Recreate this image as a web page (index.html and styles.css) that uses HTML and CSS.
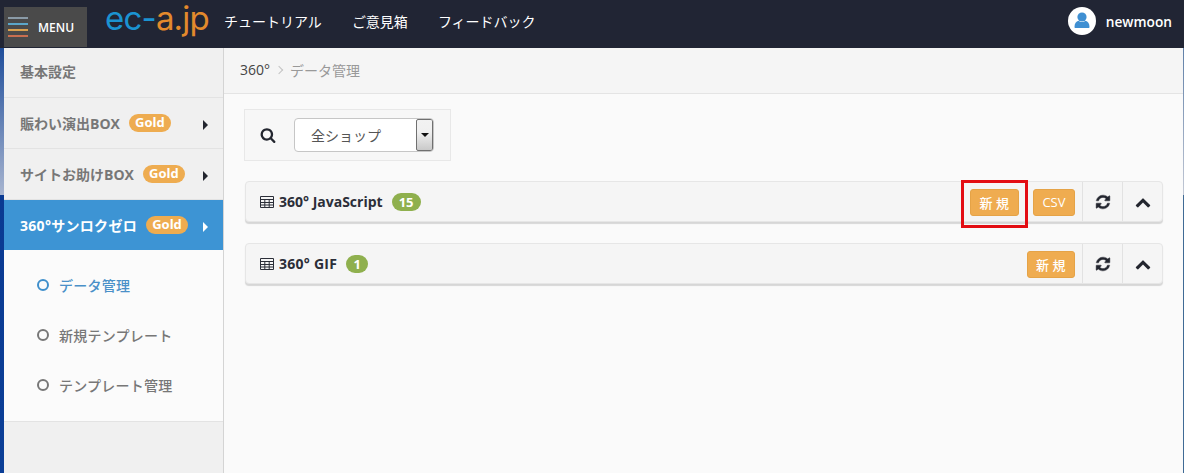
FILE: index.html
```html
<!DOCTYPE html>
<html lang="ja">
<head>
<meta charset="utf-8">
<title>360° データ管理</title>
<link rel="stylesheet" href="styles.css">
</head>
<body>
<header class="topbar">
  <div class="menu-btn">
    <span class="burger"><i class="b1"></i><i class="b2"></i><i class="b3"></i><i class="b4"></i></span>
    <span class="menu-label">MENU</span>
  </div>
  <div class="logo"><span class="logo-blue">ec-</span><span class="logo-orange">a.jp</span></div>
  <nav class="topnav">
    <a>チュートリアル</a>
    <a>ご意見箱</a>
    <a>フィードバック</a>
  </nav>
  <div class="user">
    <span class="avatar">
      <svg viewBox="0 0 28 28" width="28" height="28"><circle cx="14" cy="10" r="4.6" fill="#3f8fd2"/><path d="M7.500 21c-.6 0-1-.4-1-1 0-3.600 1.700-5.800 4-6.300 1 .9 2.200 1.400 3.500 1.400s2.500-.5 3.500-1.400c2.300.5 4 2.700 4 6.300 0 .6-.4 1-1 1z" fill="#3f8fd2"/></svg>
    </span>
    <span class="user-name">newmoon</span>
  </div>
</header>
<div class="body-row">
  <div class="desktop-edge"></div>
  <aside class="sidebar">
    <div class="side-item first"><span class="side-text">基本設定</span></div>
    <div class="side-item"><span class="side-text">賑わい演出BOX</span><span class="gold">Gold</span><span class="caret"></span></div>
    <div class="side-item"><span class="side-text">サイトお助けBOX</span><span class="gold">Gold</span><span class="caret"></span></div>
    <div class="side-item active"><span class="side-text">360°サンロクゼロ</span><span class="gold">Gold</span><span class="caret"></span></div>
    <ul class="submenu">
      <li class="current"><i class="ring"></i>データ管理</li>
      <li><i class="ring"></i>新規テンプレート</li>
      <li><i class="ring"></i>テンプレート管理</li>
    </ul>
  </aside>
  <main class="content">
    <div class="breadcrumb"><span class="crumb-root">360°</span><span class="crumb-sep"></span><span class="crumb-cur">データ管理</span></div>
    <div class="content-inner">
      <div class="searchbar">
        <svg class="search-icon" viewBox="0 0 1792 1792" width="16" height="16"><path fill="#23262f" d="M1216 832q0-185-131.500-316.500t-316.500-131.500-316.500 131.500-131.500 316.500 131.500 316.500 316.500 131.500 316.500-131.500 131.500-316.500zm512 832q0 52-38 90t-90 38q-54 0-90-38l-343-342q-179 124-399 124-143 0-273.500-55.500t-225-150-150-225-55.500-273.500 55.500-273.500 150-225 225-150 273.500-55.500 273.500 55.500 225 150 150 225 55.500 273.500q0 220-124 399l343 343q37 37 37 90z"/></svg>
        <div class="select">
          <span class="select-value">全ショップ</span>
          <span class="select-arrow"><i></i></span>
        </div>
      </div>

      <section class="panel">
        <h2 class="panel-title">
          <svg class="table-icon" viewBox="0 0 14 12" width="14" height="12"><path fill="none" stroke="#2b2e38" stroke-width="1" d="M.5.5h13v11H.5zM.5 3.500h13M.5 6.500h13M.5 9h13M4.800 3.500v8M9.200 3.500v8"/></svg>
          360° JavaScript<span class="count">15</span>
        </h2>
        <div class="panel-actions">
          <div class="btns">
            <span class="highlight"><button class="btn">新 規</button></span>
            <button class="btn btn-csv">CSV</button>
          </div>
          <button class="tool"><svg viewBox="0 0 1792 1792" width="16" height="16"><path fill="#23262f" stroke="#23262f" stroke-width="50" d="M1639 1056q0 5-1 7-64 268-268 434.500t-478 166.500q-146 0-282.500-55t-243.500-157l-129 129q-19 19-45 19t-45-19-19-45v-448q0-26 19-45t45-19h448q26 0 45 19t19 45-19 45l-137 137q71 66 161 102t187 36q134 0 250-65t186-179q11-17 53-117 8-23 30-23h192q13 0 22.500 9.500t9.500 22.500zm25-800v448q0 26-19 45t-45 19h-448q-26 0-45-19t-19-45 19-45l138-138q-148-137-349-137-134 0-250 65t-186 179q-11 17-53 117-8 23-30 23h-199q-13 0-22.500-9.500t-9.500-22.500v-7q65-268 270-434.500t480-166.500q146 0 284 55.500t245 156.500l130-129q19-19 45-19t45 19 19 45z"/></svg></button>
          <button class="tool"><svg viewBox="0 0 1792 1792" width="16" height="16"><path fill="#23262f" d="M1683 1331l-166 165q-19 19-45 19t-45-19l-531-531-531 531q-19 19-45 19t-45-19l-166-165q-19-19-19-45.500t19-45.500l742-741q19-19 45-19t45 19l742 741q19 19 19 45.500t-19 45.500z"/></svg></button>
        </div>
      </section>

      <section class="panel">
        <h2 class="panel-title title-short">
          <svg class="table-icon" viewBox="0 0 14 12" width="14" height="12"><path fill="none" stroke="#2b2e38" stroke-width="1" d="M.5.5h13v11H.5zM.5 3.500h13M.5 6.500h13M.5 9h13M4.800 3.500v8M9.200 3.500v8"/></svg>
          360° GIF<span class="count">1</span>
        </h2>
        <div class="panel-actions">
          <div class="btns"><button class="btn btn-wide">新 規</button></div>
          <button class="tool"><svg viewBox="0 0 1792 1792" width="16" height="16"><path fill="#23262f" stroke="#23262f" stroke-width="50" d="M1639 1056q0 5-1 7-64 268-268 434.500t-478 166.500q-146 0-282.500-55t-243.500-157l-129 129q-19 19-45 19t-45-19-19-45v-448q0-26 19-45t45-19h448q26 0 45 19t19 45-19 45l-137 137q71 66 161 102t187 36q134 0 250-65t186-179q11-17 53-117 8-23 30-23h192q13 0 22.500 9.500t9.500 22.500zm25-800v448q0 26-19 45t-45 19h-448q-26 0-45-19t-19-45 19-45l138-138q-148-137-349-137-134 0-250 65t-186 179q-11 17-53 117-8 23-30 23h-199q-13 0-22.500-9.500t-9.500-22.500v-7q65-268 270-434.500t480-166.500q146 0 284 55.500t245 156.500l130-129q19-19 45-19t45 19 19 45z"/></svg></button>
          <button class="tool"><svg viewBox="0 0 1792 1792" width="16" height="16"><path fill="#23262f" d="M1683 1331l-166 165q-19 19-45 19t-45-19l-531-531-531 531q-19 19-45 19t-45-19l-166-165q-19-19-19-45.500t19-45.500l742-741q19-19 45-19t45 19l742 741q19 19 19 45.500t-19 45.500z"/></svg></button>
        </div>
      </section>
    </div>
  </main>
  <div class="right-edge"></div>
</div>
</body>
</html>
```
FILE: styles.css
```css
* { box-sizing: border-box; }
html, body { height: 100%; }
body {
  margin: 0;
  height: 473px;
  overflow: hidden;
  display: flex;
  flex-direction: column;
  font-family: "Open Sans", "Noto Sans CJK JP", sans-serif;
  font-size: 14px;
  color: #333;
  background: #fafafa;
}

/* top bar */
.topbar {
  height: 48px;
  flex: none;
  display: flex;
  align-items: flex-start;
  background: #212534;
  padding-left: 4px;
  color: #fff;
}
.menu-btn {
  width: 83px;
  height: 40px;
  margin-top: 7px;
  background: #4a4a4a;
  display: flex;
  align-items: center;
  padding-left: 4px;
}
.burger { width: 20px; display: flex; flex-direction: column; gap: 4px; margin-right: 10px; }
.burger i { display: block; height: 2px; }
.b1 { background: #8a9aa6; }
.b2 { background: #5ba6c9; }
.b3 { background: #d9a14f; }
.b4 { background: #c96f50; }
.menu-label { font-size: 12px; font-weight: 600; }
.logo {
  margin-left: 18px;
  height: 48px;
  width: 111px;
  font-family: "Inter", sans-serif;
  font-size: 33px;
  font-weight: 400;
  line-height: 36px;
  letter-spacing: -.8px;
  white-space: nowrap;
}
.logo-blue { color: #1b93d1; }
.logo-orange { color: #e38a2c; }
.topnav {
  display: flex;
  gap: 30px;
  margin-left: 8px;
  font-size: 14px;
  line-height: 43px;
}
.user { margin-left: auto; margin-right: 12px; margin-top: 7px; display: flex; align-items: center; gap: 10px; }
.avatar { width: 28px; height: 28px; border-radius: 50%; background: #fff; display: block; }
.avatar svg { display: block; }
.user-name { font-size: 13.700px; font-weight: 600; }

/* main row */
.body-row { flex: 1; display: flex; min-height: 0; }
.desktop-edge {
  width: 4px;
  flex: none;
  background: linear-gradient(#1f4e9b 0, #a8b5d0 147px, #0a3a92 147px, #0b3f97 100%);
}
.right-edge {
  width: 1px;
  flex: none;
  background: linear-gradient(#5f7fa8 0, #c2c8d4 147px, #3f6a95 147px, #3f6a95 100%);
}

/* sidebar */
.sidebar {
  width: 220px;
  flex: none;
  background: #f0f0f0;
  border-right: 1px solid #d4d4d4;
}
.side-item {
  height: 51px;
  display: flex;
  align-items: center;
  padding-left: 16px;
  border-bottom: 1px solid #e3e3e3;
  font-size: 14px;
  font-weight: 700;
  color: #777;
  position: relative;
}
.side-item.first { height: 50px; padding-bottom: 3px; }
.side-item.active { background: #3d94d4; color: #fff; border-bottom: 0; height: 50px; }
.active .side-text { letter-spacing: .3px; }
.gold {
  margin-left: 9px;
  height: 18px;
  width: 42px;
  border-radius: 9px;
  background: #eeac50;
  color: #fff;
  font-size: 13px;
  font-weight: 700;
  line-height: 17px;
  text-align: center;
}
.caret {
  position: absolute;
  left: 199px;
  top: 22px;
  border-left: 5px solid #23262f;
  border-top: 5px solid transparent;
  border-bottom: 5px solid transparent;
}
.active .caret { border-left-color: #fff; }
.submenu {
  margin: 0;
  padding: 10px 0 0;
  list-style: none;
  height: 172px;
  background: #fbfbfb;
  border-bottom: 1px solid #e3e3e3;
  font-size: 14px;
  font-weight: 500;
  letter-spacing: .25px;
  color: #777;
}
.submenu li { height: 50px; display: flex; align-items: center; padding-left: 33px; }
.submenu .current { color: #4a90c8; }
.ring {
  width: 12px;
  height: 12px;
  border: 2px solid #777;
  border-radius: 50%;
  margin-right: 10px;
}
.current .ring { border-color: #3f8fcb; }

/* content */
.content { flex: 1; min-width: 0; display: flex; flex-direction: column; }
.breadcrumb {
  height: 46px;
  flex: none;
  background: #f5f5f5;
  border-bottom: 1px solid #e4e4e4;
  padding: 0 0 2px 16px;
  display: flex;
  align-items: center;
  font-size: 14px;
}
.crumb-root { color: #444; }
.crumb-sep {
  width: 6px;
  height: 6px;
  margin: 1px 8px 0 6px;
  border-top: 1px solid #c4c4c4;
  border-right: 1px solid #c4c4c4;
  transform: rotate(45deg);
}
.crumb-cur { color: #999; }
.content-inner { padding: 15px 20px 0 20px; }
.searchbar {
  width: 207px;
  height: 52px;
  background: #f7f7f7;
  border: 1px solid #e8e8e8;
  display: flex;
  align-items: center;
  padding-left: 15px;
  gap: 18px;
  margin-bottom: 20px;
}
.search-icon { flex: none; }
.select {
  width: 140px;
  height: 34px;
  background: #fff;
  border: 1px solid #c6c6c6;
  border-radius: 4px;
  display: flex;
  justify-content: space-between;
  align-items: stretch;
  font-size: 14px;
  color: #555;
  overflow: hidden;
}
.select-value { padding-left: 16px; line-height: 33px; }
.select-arrow {
  width: 17px;
  background: linear-gradient(#f2f2f2, #f0f0f0 40%, #c9c9c9);
  border: 1px solid #707070;
  border-radius: 2px;
  display: flex;
  justify-content: center;
  padding-top: 13px;
}
.select-arrow i {
  width: 0;
  height: 0;
  border-top: 4px solid #111;
  border-left: 4px solid transparent;
  border-right: 4px solid transparent;
}
.panel {
  margin-left: 1px;
  width: 918px;
  height: 41px;
  background: #f5f5f5;
  border: 1px solid #e6e6e6;
  border-radius: 4px;
  box-shadow: 0 2px 1px rgba(0,0,0,.14);
  display: flex;
  align-items: center;
  justify-content: space-between;
  margin-bottom: 21px;
}
.panel-title {
  margin: 0;
  padding-left: 14px;
  font-size: 14px;
  font-weight: 700;
  color: #2b2e38;
  display: flex;
  align-items: center;
}
.title-short { letter-spacing: .25px; }
.table-icon { margin-right: 5px; }
.count {
  margin-left: 9px;
  height: 18px;
  min-width: 22px;
  padding: 0 7px;
  border-radius: 9px;
  background: #8fb04e;
  color: #fff;
  font-size: 13px;
  font-weight: 700;
  line-height: 18px;
  text-align: center;
  letter-spacing: 0;
}
.panel-actions { display: flex; align-self: stretch; align-items: stretch; }
.btns { display: flex; align-items: center; gap: 14px; padding: 1px 7px 0 0; }
.btn {
  height: 27px;
  padding: 0 9px;
  border: 1px solid #e5a347;
  border-radius: 3px;
  background: #efac50;
  color: #fff;
  font: 500 13px "Open Sans", "Noto Sans CJK JP", sans-serif;
  display: block;
}
.btn-csv { padding: 0 8.500px; }
.btn-wide { padding: 0 8.500px; }
.highlight {
  position: relative;
  display: block;
}
.highlight::after {
  content: "";
  position: absolute;
  left: -9px;
  right: -9px;
  top: -9px;
  bottom: -12px;
  border: 3px solid #e30d13;
}
.tool {
  width: 40px;
  padding: 0;
  background: transparent;
  border: 0;
  border-left: 1px solid #e2e2e2;
  display: flex;
  align-items: center;
  justify-content: center;
}
```
